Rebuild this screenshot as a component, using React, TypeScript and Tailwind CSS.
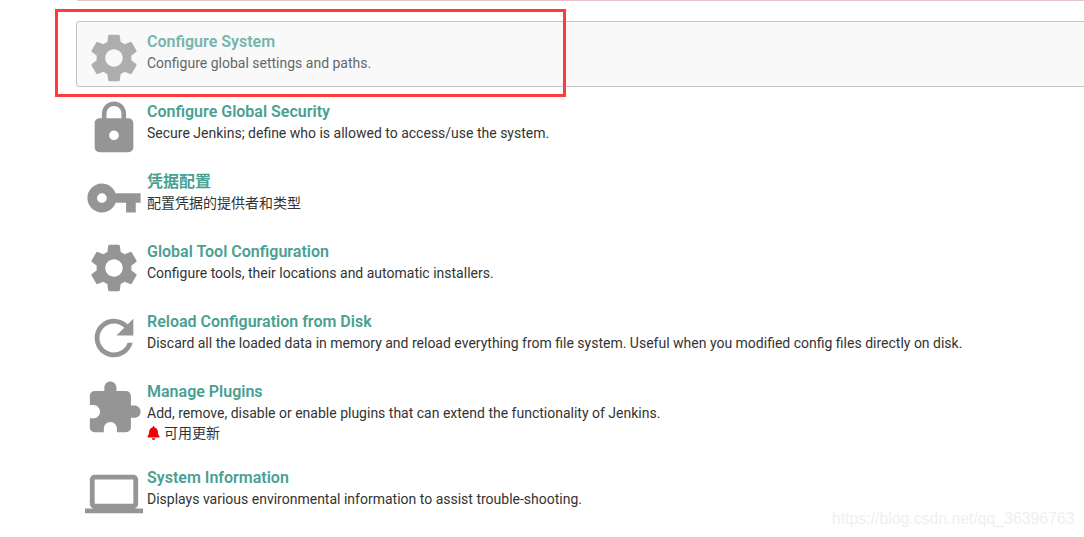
import type { ReactNode } from "react";
import { FaBell } from "react-icons/fa";

const icons = {
  gear: "M19.14 12.94c.04-.3.06-.61.06-.94 0-.32-.02-.64-.07-.94l2.03-1.58c.18-.14.23-.41.12-.61l-1.92-3.32c-.12-.22-.37-.29-.59-.22l-2.39.96c-.5-.38-1.03-.7-1.62-.94l-.36-2.54c-.04-.24-.24-.41-.48-.41h-3.84c-.24 0-.43.17-.47.41l-.36 2.54c-.59.24-1.13.57-1.62.94l-2.39-.96c-.22-.08-.47 0-.59.22L2.74 8.87c-.12.21-.08.47.12.61l2.03 1.58c-.05.3-.09.63-.09.94s.02.64.07.94l-2.03 1.58c-.18.14-.23.41-.12.61l1.92 3.32c.12.22.37.29.59.22l2.39-.96c.5.38 1.03.7 1.62.94l.36 2.54c.05.24.24.41.48.41h3.84c.24 0 .44-.17.47-.41l.36-2.54c.59-.24 1.13-.56 1.62-.94l2.39.96c.22.08.47 0 .59-.22l1.92-3.32c.12-.22.07-.47-.12-.61l-2.01-1.58zM12 15.6c-1.98 0-3.6-1.62-3.6-3.6s1.62-3.6 3.6-3.6 3.6 1.62 3.6 3.6-1.62 3.6-3.6 3.6z",
  lock: "M18 8h-1V6c0-2.76-2.24-5-5-5S7 3.24 7 6v2H6c-1.1 0-2 .9-2 2v10c0 1.1.9 2 2 2h12c1.1 0 2-.9 2-2V10c0-1.1-.9-2-2-2zm-6 9c-1.1 0-2-.9-2-2s.9-2 2-2 2 .9 2 2-.9 2-2 2zm3.1-9H8.9V6c0-1.71 1.39-3.1 3.1-3.1 1.71 0 3.1 1.39 3.1 3.1v2z",
  key: "M12.65 10C11.83 7.67 9.61 6 7 6c-3.31 0-6 2.69-6 6s2.69 6 6 6c2.61 0 4.83-1.67 5.65-4H17v4h4v-4h2v-4H12.65zM7 14c-1.1 0-2-.9-2-2s.9-2 2-2 2 .9 2 2-.9 2-2 2z",
  reload: "M17.65 6.35C16.2 4.9 14.21 4 12 4c-4.42 0-7.99 3.58-7.99 8s3.57 8 7.99 8c3.73 0 6.84-2.55 7.73-6h-2.08c-.82 2.33-3.04 4-5.65 4-3.31 0-6-2.69-6-6s2.69-6 6-6c1.66 0 3.14.69 4.22 1.78L13 11h7V4l-2.35 2.35z",
  plugin: "M20.5 11H19V7c0-1.1-.9-2-2-2h-4V3.5C13 2.12 11.88 1 10.5 1S8 2.12 8 3.5V5H4c-1.1 0-1.99.9-1.99 2v3.8H3.5c1.49 0 2.7 1.21 2.7 2.7s-1.21 2.7-2.7 2.7H2V20c0 1.1.9 2 2 2h3.8v-1.5c0-1.49 1.21-2.7 2.7-2.7 1.49 0 2.7 1.21 2.7 2.7V22H17c1.1 0 2-.9 2-2v-4h1.5c1.38 0 2.5-1.12 2.5-2.5S21.88 11 20.5 11z",
  laptop: "M20 18c1.1 0 1.99-.9 1.99-2L22 6c0-1.1-.9-2-2-2H4c-1.1 0-2 .9-2 2v10c0 1.1.9 2 2 2H0v2h24v-2h-4zM4 6h16v10H4V6z",
};

type ManageRowProps = {
  icon: keyof typeof icons;
  title: string;
  description: string;
  active?: boolean;
  children?: ReactNode;
};

function ManageRow({ icon, title, description, active, children }: ManageRowProps) {
  return (
    <div
      className={
        active
          ? "mb-1 flex min-h-[66px] rounded-[3px] border border-[#c4c4c4] bg-[#f9f9f9] pt-[7px] pl-2"
          : "mb-1 flex min-h-[66px] rounded-[3px] border border-transparent pt-[7px] pl-2"
      }
    >
      <svg viewBox="0 0 24 24" className="-mb-px h-[58px] w-[58px] shrink-0 fill-[#959595]" style={{ opacity: active ? 0.75 : 1 }}>
        <path d={icons[icon]} />
      </svg>
      <div className="mt-[2px] ml-1 pb-[9px]" style={{ opacity: active ? 0.75 : 1 }}>
        <div className="text-base leading-[22px] font-semibold text-[#4a9f93]">{title}</div>
        <div className="text-sm leading-5 text-[#333333]">{description}</div>
        {children}
      </div>
    </div>
  );
}

export default function App() {
  return (
    <div className="relative h-[537px] w-[1084px] overflow-hidden bg-white font-['Roboto','Noto_Sans_CJK_SC',sans-serif]">
      <div className="ml-[77px] h-px bg-[#e8c5cd]" />
      <div className="mt-5 mr-[-20px] ml-[76px]">
        <ManageRow icon="gear" title="Configure System" description="Configure global settings and paths." active />
        <ManageRow icon="lock" title="Configure Global Security" description="Secure Jenkins; define who is allowed to access/use the system." />
        <ManageRow icon="key" title="凭据配置" description="配置凭据的提供者和类型" />
        <ManageRow icon="gear" title="Global Tool Configuration" description="Configure tools, their locations and automatic installers." />
        <ManageRow
          icon="reload"
          title="Reload Configuration from Disk"
          description="Discard all the loaded data in memory and reload everything from file system. Useful when you modified config files directly on disk."
        />
        <ManageRow icon="plugin" title="Manage Plugins" description="Add, remove, disable or enable plugins that can extend the functionality of Jenkins.">
          <div className="flex items-center text-sm leading-5 text-[#333333]">
            <FaBell className="mr-1 h-[14px] w-[13px] text-[#f00000]" />
            <span>可用更新</span>
          </div>
        </ManageRow>
        <ManageRow icon="laptop" title="System Information" description="Displays various environmental information to assist trouble-shooting." />
      </div>
      <div className="absolute top-[9px] left-[55px] h-[88px] w-[511px] border-[3px] border-[#ff3a3a]" />
      <div className="absolute top-[509px] left-[832px] font-['Liberation_Sans',sans-serif] text-[15.8px] leading-5 text-[#efefef]">
        https://blog.csdn.net/qq_36396763
      </div>
    </div>
  );
}
